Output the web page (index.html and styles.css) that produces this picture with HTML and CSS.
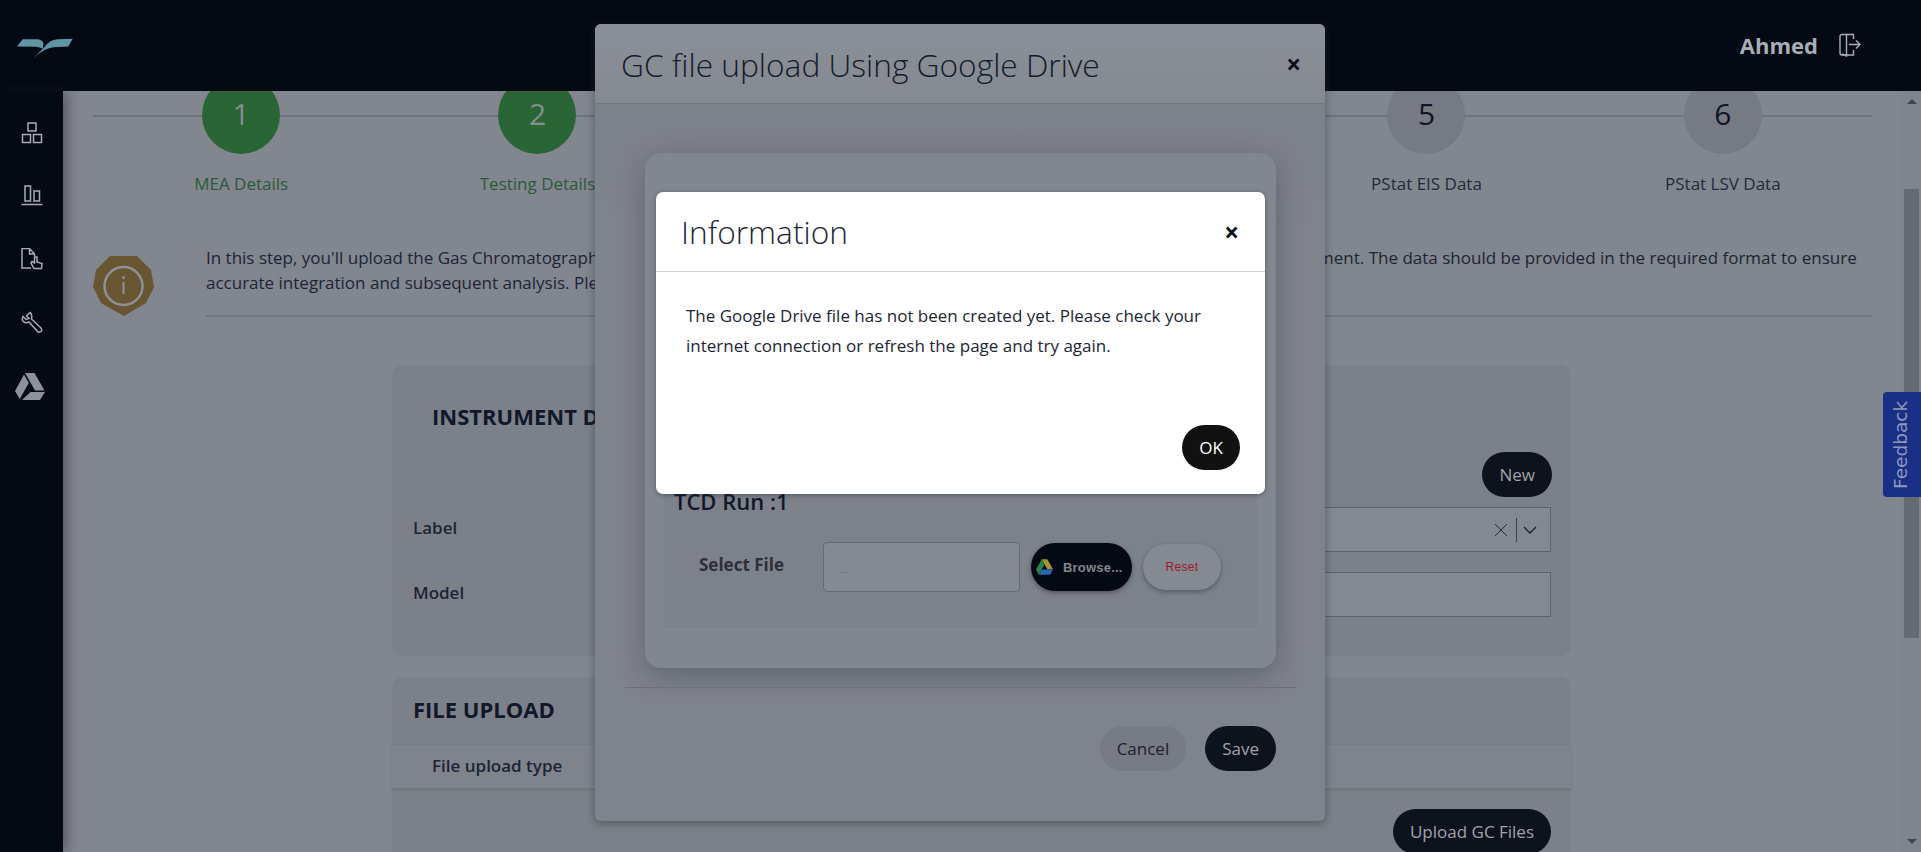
FILE: index.html
```html
<!DOCTYPE html>
<html>
<head>
    <title>GC File Upload</title>
    <link rel="stylesheet" href="styles.css">
</head>
<body>

<header class="top-bar">
    <svg class="logo" viewBox="0 0 60 26">
        <path d="M1 12.5 L6.7 5.2 L22 5.2 Q26 5.6 27.5 9 L26.7 14.8 Q24 13.4 20 12.8 Z"/>
        <path d="M56.7 4.8 L42 5.2 Q37 5.8 34 7.5 Q31 9.5 29 12.5 L24 17.5 L17.3 24.5 L22.3 20 L29 15.8 Q33 14 37.3 13.2 L52.3 12.5 Z"/>
    </svg>
    <div class="user-box">
        <span class="user-name">Ahmed</span>
        <svg class="logout-icon" viewBox="0 0 22 24">
            <path d="M14.5 6 V1.5 H3 Q1 1.5 1 3.5 V20 Q1 22 3 22 H14.5 V17"/>
            <path d="M7.5 1.5 V23 L3 21"/>
            <path d="M10 11.5 H21 M17 7.5 L21 11.5 L17 15.5"/>
        </svg>
    </div>
</header>

<div class="page">
    <nav class="side-nav">
        <svg class="nav-icon" viewBox="0 0 22 22">
            <rect x="7" y="1" width="8" height="8"/>
            <rect x="1.5" y="12.5" width="8" height="8"/>
            <rect x="12.5" y="12.5" width="8" height="8"/>
        </svg>
        <svg class="nav-icon" viewBox="0 0 22 22">
            <rect x="4" y="1" width="5.5" height="15"/>
            <rect x="13" y="6" width="5.5" height="10"/>
            <path d="M0.5 19.5 H21.5"/>
        </svg>
        <svg class="nav-icon" viewBox="0 0 22 22">
            <path d="M10 20 H1 V0.5 H8.5 L13.5 6 V8 M8.5 0.5 V6 H13.5"/>
            <path d="M13.5 9 V15 L11 13.5 L10 15 L13 20.5 H20.5 L21 15.5 L16 14 V9 Z"/>
        </svg>
        <svg class="nav-icon" viewBox="0 0 22 22">
            <path d="M9 1.5 L5.5 5 L8 7.5 L5 8.5 L2 5.5 Q0 10 4 11.5 Q6 12 8 11 L17 21 Q19 21.5 20.5 20 Q21 18 20 17 L10.5 8 Q11.5 3 9 1.5 Z"/>
        </svg>
        <svg class="drive-icon" viewBox="0 0 30 27">
            <path d="M10 0 H19.5 L29.5 17.5 H20 Z"/>
            <path d="M9 1.5 L13.8 10 L4.8 26 L0 18 Z"/>
            <path d="M15.5 19 H30 L25 27 H7 Z"/>
        </svg>
    </nav>

    <main class="main">
        <div class="steps">
            <div class="step done"><div class="step-num">1</div><div class="step-label">MEA Details</div></div>
            <div class="step done"><div class="step-num">2</div><div class="step-label">Testing Details</div></div>
            <div class="step"><div class="step-num">3</div><div class="step-label">GC Data</div></div>
            <div class="step"><div class="step-num">4</div><div class="step-label">PStat Data</div></div>
            <div class="step"><div class="step-num">5</div><div class="step-label">PStat EIS Data</div></div>
            <div class="step"><div class="step-num">6</div><div class="step-label">PStat LSV Data</div></div>
        </div>

        <div class="intro">
            <svg class="intro-icon" viewBox="0 0 61 60">
                <path d="M17 0 H44 L58 14 L61 31 L53 47 L31 60 L8 47 L0 31 L3 14 Z" fill="#685532"/>
                <circle cx="30.5" cy="30" r="19" fill="none" stroke="#8d9096" stroke-width="2.5"/>
                <circle cx="30.5" cy="21.5" r="1.5" fill="#8d9096"/>
                <path d="M30.5 26 V38" stroke="#8d9096" stroke-width="2"/>
            </svg>
            <p class="intro-text">In this step, you'll upload the Gas Chromatography (GC) data files generated during your electrolyzer cells, as recorded directly by your instrument. The data should be provided in the required format to ensure<br>accurate integration and subsequent analysis. Please select the instrument first.</p>
        </div>

        <section class="card instrument-card">
            <h3 class="card-title instrument-title">INSTRUMENT DETAILS</h3>
            <div class="new-row"><button class="btn btn-dark">New</button></div>
            <div class="form-row">
                <label class="form-label">Label</label>
                <div class="form-box">
                    <svg class="select-clear" viewBox="0 0 14 14"><path d="M1 1 L13 13 M13 1 L1 13"/></svg>
                    <span class="select-sep"></span>
                    <svg class="select-arrow" viewBox="0 0 14 8"><path d="M1 1 L7 7 L13 1"/></svg>
                </div>
            </div>
            <div class="form-row">
                <label class="form-label">Model</label>
                <div class="form-box"></div>
            </div>
        </section>

        <section class="card upload-card">
            <h3 class="card-title">FILE UPLOAD</h3>
            <div class="upload-type">File upload type</div>
            <div class="upload-actions"><button class="btn btn-dark upload-btn">Upload GC Files</button></div>
        </section>
    </main>

    <div class="scroll-bar">
        <span class="scroll-up"></span>
        <span class="scroll-thumb"></span>
        <span class="scroll-down"></span>
    </div>
</div>

<button class="feedback-tab">Feedback</button>

<!-- GC upload modal -->
<div class="modal">
    <div class="modal-head">
        <h2 class="modal-title">GC file upload Using Google Drive</h2>
        <span class="modal-close">&times;</span>
    </div>
    <div class="modal-body">
        <div class="run-card">
            <div class="run-section">
                <div class="run-title">TCD Run :1</div>
                <div class="run-row">
                    <span class="run-label">Select File</span>
                    <div class="file-box">...</div>
                    <button class="browse-btn">
                        <svg class="browse-icon" viewBox="0 0 30 27">
                            <path d="M10 0 H20 L30 17.5 H20 Z" fill="#a8952f"/>
                            <path d="M10 0 L15 9 L5 27 L0 18 Z" fill="#2f7f49"/>
                            <path d="M10 18 H30 L25 27 H5 Z" fill="#2a69ad"/>
                        </svg>
                        Browse...
                    </button>
                    <button class="reset-btn">Reset</button>
                </div>
            </div>
        </div>
        <div class="modal-foot">
            <button class="btn btn-grey">Cancel</button>
            <button class="btn btn-dark">Save</button>
        </div>
    </div>
</div>

<!-- Information dialog -->
<div class="dialog">
    <div class="dialog-head">
        <h2 class="dialog-title">Information</h2>
        <span class="dialog-close">&times;</span>
    </div>
    <div class="dialog-body">
        The Google Drive file has not been created yet. Please check your internet connection or refresh the page and try again.
    </div>
    <div class="dialog-foot">
        <button class="btn-ok">OK</button>
    </div>
</div>

</body>
</html>
```

FILE: styles.css
```css
* {
    box-sizing: border-box;
}

html, body {
    margin: 0;
    height: 852px;
    overflow: hidden;
}

body {
    position: relative;
    display: flex;
    flex-direction: column;
    background: #82868e;
    font-family: "Open Sans", sans-serif;
    font-size: 17px;
    color: #1c2536;
}

button {
    font-family: inherit;
    border: none;
}

/* top bar */
.top-bar {
    height: 91px;
    flex: none;
    display: flex;
    align-items: center;
    justify-content: space-between;
    padding: 0 60px 0 16px;
    background: #040a14;
}

.logo {
    width: 60px;
    height: 26px;
    margin-top: 3px;
    fill: #5f95a3;
}

.user-box {
    display: flex;
    align-items: center;
    gap: 21px;
    margin-top: -2px;
}

.user-name {
    font-size: 22px;
    font-weight: 700;
    color: #a9aeb5;
}

.logout-icon {
    width: 22px;
    height: 24px;
    fill: none;
    stroke: #a9aeb5;
    stroke-width: 1.4;
}

.page {
    flex: 1;
    display: flex;
    min-height: 0;
}

/* side nav */
.side-nav {
    width: 63px;
    flex: none;
    display: flex;
    flex-direction: column;
    align-items: center;
    padding-top: 31px;
    gap: 41px;
    background: #040a14;
    box-shadow: 4px 0 12px rgba(30, 34, 44, 0.45);
    position: relative;
}

.nav-icon {
    width: 22px;
    height: 22px;
    fill: none;
    stroke: #a7acb4;
    stroke-width: 1.5;
}

.drive-icon {
    width: 30px;
    height: 27px;
    margin: -1px 0 0 -4px;
    fill: #8d9199;
}

/* main content */
.main {
    flex: 1;
    min-width: 0;
    overflow: hidden;
    padding: 0 30px;
}

.steps {
    display: grid;
    grid-template-columns: repeat(6, 1fr);
    margin: -15px 1px 0 0;
    position: relative;
}

.steps::before {
    content: "";
    position: absolute;
    left: 0;
    right: -1px;
    top: 39px;
    height: 2px;
    background: #6f737c;
}

.step {
    display: flex;
    flex-direction: column;
    align-items: center;
    position: relative;
}

.step-num {
    width: 78px;
    height: 78px;
    padding-bottom: 4px;
    border-radius: 50%;
    display: flex;
    align-items: center;
    justify-content: center;
    font-size: 30px;
    background: #767a83;
    color: #101624;
}

.step-label {
    margin-top: 18px;
    line-height: 24px;
    color: #232b3d;
}

.done .step-num {
    background: #296535;
    color: #858f8d;
}

.done .step-label {
    color: #2a5a3c;
}

.intro {
    display: flex;
    align-items: flex-start;
    gap: 52px;
    margin-top: 49px;
}

.intro-icon {
    width: 61px;
    height: 60px;
    flex: none;
    margin-top: 11px;
}

.intro-text {
    flex: 1;
    margin: 0;
    padding-bottom: 20px;
    line-height: 25px;
    white-space: nowrap;
    overflow: hidden;
    border-bottom: 2px solid #73777f;
    color: #1c2536;
}

.card {
    margin-left: 299px;
    width: 1179px;
    background: #7c8088;
    border-radius: 10px;
}

.instrument-card {
    height: 291px;
    margin-top: 48px;
    padding: 36px 19px 0 21px;
}

.card-title {
    margin: 0;
    font-size: 22px;
    line-height: 30px;
    font-weight: 700;
    color: #101829;
}

.instrument-title {
    margin-left: 19px;
}

.new-row {
    display: flex;
    justify-content: flex-end;
    margin-top: 21px;
}

.form-row {
    display: grid;
    grid-template-columns: 390px 1fr;
    align-items: center;
    margin-top: 10px;
}

.form-row + .form-row {
    margin-top: 20px;
}

.form-label {
    margin-bottom: 4px;
    font-weight: 600;
    color: #1c2536;
}

.form-box {
    height: 45px;
    border: 1px solid #5e626b;
    background: #848890;
    display: flex;
    align-items: center;
    justify-content: flex-end;
    margin-right: 1px;
    padding-right: 13px;
}

.select-clear {
    width: 14px;
    height: 14px;
    fill: none;
    stroke: #252b3a;
    stroke-width: 1;
}

.select-sep {
    width: 1px;
    height: 24px;
    margin: 0 6px 0 8px;
    background: #3c414d;
}

.select-arrow {
    width: 14px;
    height: 8px;
    fill: none;
    stroke: #1c2230;
    stroke-width: 1.3;
}

.upload-card {
    margin-top: 21px;
    padding-top: 17px;
    position: relative;
    height: 200px;
}

.upload-card .card-title {
    margin-left: 21px;
}

.upload-type {
    margin-top: 20px;
    height: 45px;
    line-height: 42px;
    padding-left: 40px;
    font-weight: 600;
    background: #7f838b;
    border-top: 1px solid #797d85;
    border-bottom: 1px solid #74787f;
    box-shadow: 0 1px 2px rgba(50, 54, 62, 0.2);
}

.upload-actions {
    display: flex;
    justify-content: flex-end;
    margin: 20px 20px 0 0;
}

.btn {
    height: 45px;
    padding: 0 17px;
    border-radius: 23px;
    font-size: 17px;
}

.btn-dark {
    background: #0d131c;
    color: #a0a4aa;
}

.btn-grey {
    background: #777b83;
    color: #1c2230;
}

.upload-btn {
    width: 158px;
    padding: 0;
}

/* scrollbar */
.scroll-bar {
    width: 19px;
    flex: none;
    position: relative;
    background: #80848c;
    padding: 98px 2px 0;
}

.scroll-thumb {
    display: block;
    height: 449px;
    background: #666a73;
}

.scroll-up, .scroll-down {
    position: absolute;
    left: 5px;
    width: 0;
    height: 0;
    border-left: 5px solid transparent;
    border-right: 5px solid transparent;
}

.scroll-up {
    top: 8px;
    border-bottom: 5px solid #3f434a;
}

.scroll-down {
    bottom: 8px;
    border-top: 5px solid #3f434a;
}

/* feedback tab */
.feedback-tab {
    position: absolute;
    right: 0;
    top: 392px;
    width: 38px;
    height: 105px;
    padding: 0 0 0 3px;
    background: #1a2f86;
    color: #8f98bb;
    font-family: "DejaVu Sans", sans-serif;
    font-size: 18.5px;
    writing-mode: vertical-rl;
    transform: rotate(180deg);
    border-radius: 0 4px 4px 0;
}

/* gc modal */
.modal {
    position: absolute;
    left: 595px;
    top: 24px;
    width: 730px;
    height: 797px;
    background: #7f838b;
    border-radius: 6px;
    box-shadow: 0 2px 8px rgba(40, 44, 52, 0.5);
    display: flex;
    flex-direction: column;
}

.modal-head {
    height: 80px;
    flex: none;
    display: flex;
    align-items: center;
    justify-content: space-between;
    padding: 1px 24px 0 26px;
    background: linear-gradient(#8b8f97, #858990);
    border-bottom: 1px solid #70747d;
    border-radius: 6px 6px 0 0;
}

.modal-title {
    margin: 0;
    font-size: 31.7px;
    font-weight: 300;
    color: #141b2b;
}

.modal-close {
    font-size: 26px;
    font-weight: 700;
    color: #0b0f18;
}

.modal-body {
    flex: 1;
    padding: 49px 49px 0 50px;
    background: linear-gradient(#7d8189, #7f838b 120px);
    border-radius: 0 0 6px 6px;
}

.run-card {
    height: 515px;
    display: flex;
    flex-direction: column;
    justify-content: flex-end;
    padding: 0 19px 40px;
    background: #82868e;
    border-radius: 16px;
    box-shadow: 0 8px 28px rgba(50, 54, 62, 0.4);
}

.run-section {
    height: 200px;
    padding: 59px 0 0 10px;
    background: #7d8189;
}

.run-title {
    font-size: 22px;
    font-weight: 600;
    line-height: 28px;
    color: #101829;
}

.run-row {
    display: flex;
    align-items: center;
    margin-top: 27px;
    padding-left: 25px;
}

.run-label {
    width: 124px;
    flex: none;
    margin-bottom: 6px;
    font-weight: 700;
    color: #2c303a;
}

.file-box {
    width: 197px;
    height: 50px;
    padding: 10px 16px 0;
    border: 1px solid #666a73;
    border-radius: 4px;
    background: #858991;
    font-size: 10px;
    line-height: 32px;
    color: #60646c;
}

.browse-btn {
    width: 101px;
    height: 48px;
    margin-left: 11px;
    display: flex;
    align-items: center;
    gap: 10px;
    padding: 0 0 0 5px;
    border-radius: 24px;
    background: #040a14;
    color: #82868d;
    font-family: "Liberation Sans", sans-serif;
    font-size: 13px;
    font-weight: 700;
    letter-spacing: 0.2px;
    box-shadow: 0 2px 4px rgba(40, 44, 52, 0.5);
}

.browse-icon {
    width: 17px;
    height: 16px;
}

.reset-btn {
    width: 78px;
    height: 46px;
    margin-left: 11px;
    border-radius: 23px;
    background: #858991;
    color: #981c2a;
    font-family: "Liberation Sans", sans-serif;
    font-size: 12px;
    letter-spacing: 0.3px;
    box-shadow: 0 2px 4px rgba(40, 44, 52, 0.45);
}

.modal-foot {
    display: flex;
    justify-content: flex-end;
    gap: 19px;
    margin: 19px -20px 0 -20px;
    padding: 38px 20px 0 0;
    border-top: 1px solid #6c7079;
}

/* information dialog */
.dialog {
    position: absolute;
    left: 656px;
    top: 192px;
    width: 609px;
    height: 302px;
    display: flex;
    flex-direction: column;
    background: #fff;
    border-radius: 7px;
    box-shadow: 0 1px 4px rgba(40, 44, 52, 0.5);
}

.dialog-head {
    height: 80px;
    flex: none;
    display: flex;
    align-items: center;
    justify-content: space-between;
    padding: 0 26px 0 25px;
    border-bottom: 1px solid #d0d2d6;
}

.dialog-title {
    margin: 0;
    font-size: 31.7px;
    font-weight: 300;
    color: #1c2536;
}

.dialog-close {
    font-size: 26px;
    font-weight: 700;
    color: #0b0f18;
}

.dialog-body {
    padding: 29px 30px 0;
    line-height: 30px;
    color: #1c2536;
}

.dialog-foot {
    margin-top: auto;
    display: flex;
    justify-content: flex-end;
    padding: 0 25px 24px 0;
}

.btn-ok {
    width: 58px;
    height: 45px;
    border-radius: 23px;
    background: #111;
    color: #fff;
    font-size: 17px;
}
```
